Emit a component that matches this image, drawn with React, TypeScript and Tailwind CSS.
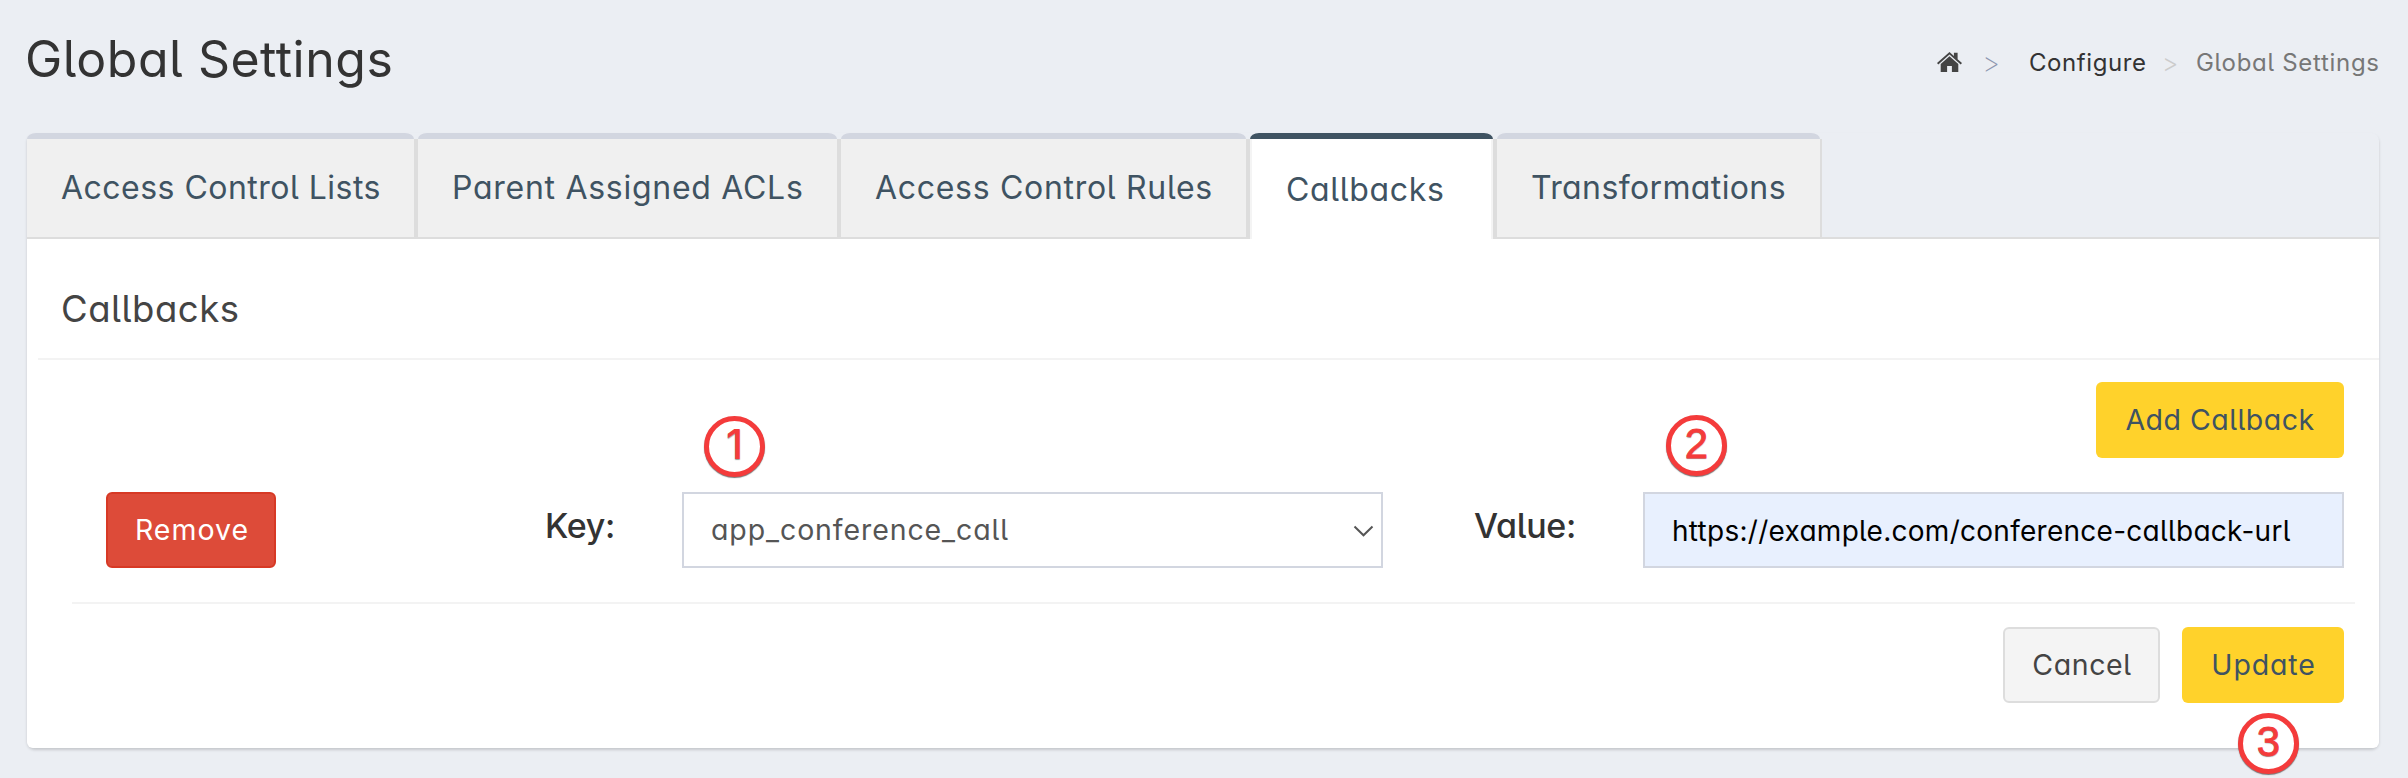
import type { ReactNode } from "react";

type Tab = { label: string; box: string; text: string; active?: boolean };

const tabs: Tab[] = [
  { label: "Access Control Lists", box: "w-[389px]", text: "pl-[34px] tracking-[0.48px]" },
  { label: "Parent Assigned ACLs", box: "w-[423px]", text: "pl-[34px] tracking-[0.72px]" },
  { label: "Access Control Rules", box: "w-[409px]", text: "pl-[34px] tracking-[0.7px]" },
  { label: "Callbacks", box: "w-[247px]", text: "pl-[34px] tracking-[0.67px]", active: true },
  { label: "Transformations", box: "w-[327px]", text: "pl-[34px] tracking-[0.38px]" },
];

function TabItem({ tab, first }: { tab: Tab; first: boolean }) {
  return (
    <li className={`flex h-[106px] flex-col ${tab.box}`}>
      <div
        className={`h-[6px] shrink-0 [border-radius:9px_9px_0_0/6px_6px_0_0] ${first ? "mr-[2px]" : "mx-[2px]"} ${
          tab.active ? "bg-[#3f5362]" : "bg-[#d2d6e0]"
        }`}
      />
      <div
        className={`flex flex-1 border-[#ddd] ${first ? "border-r-2" : "border-x-2"} ${
          tab.active ? "bg-white" : "border-b-2 bg-[#f0f0f0]"
        }`}
      >
        <a
          className={`flex-1 whitespace-nowrap text-[32px] leading-[40px] text-[#3f5362] ${tab.text} ${
            tab.active ? "border-x-2 border-[#f4f4f4] pt-[31px]" : "pt-[29px]"
          }`}
        >
          {tab.label}
        </a>
      </div>
    </li>
  );
}

function Step({ children, place, digit }: { children: ReactNode; place: string; digit: string }) {
  return (
    <span
      className={`absolute flex size-[61px] items-center justify-center rounded-full border-[5px] border-[#f43b3b] bg-white pb-[4px] leading-none text-[#f43b3b] shadow-[0_1px_1px_#777] [text-shadow:0_1px_1px_#999] ${place} ${digit}`}
    >
      {children}
    </span>
  );
}

const button = "flex h-[76px] items-center justify-center rounded-[6px] text-[28.5px] whitespace-nowrap";

export default function App() {
  return (
    <div className="h-[778px] w-[2408px] overflow-hidden bg-[#ebeef3] pl-[27px] font-['Inter',sans-serif] text-[#333] [font-feature-settings:'cv11','cv05']">
      <header className="flex h-[133px] w-[2354px] justify-between">
        <h1 className="-ml-[2px] pt-[29px] text-[50px] leading-[60px] tracking-[0.5px] whitespace-nowrap">
          Global Settings
        </h1>
        <nav className="flex pt-[48px] text-[24px] leading-[30px] whitespace-nowrap">
          <svg className="mt-[4px] h-[20px] w-[25px]" viewBox="0 0 25 20" fill="#444">
            <path d="M12.5 0 16.9 3.9V.8h3.7v6.4L25 11l-1.3 1.5L12.5 2.6 1.3 12.500 0 11Z" />
            <path d="M12.5 4.200 21.300 12v8h-6.400v-6h-4.800v6H3.700v-8Z" />
          </svg>
          <span className="w-[67px] pl-[20px] text-[28px] font-[200] text-[#8f98b0]">&gt;</span>
          <a className="w-[132px] tracking-[0.58px]">Configure</a>
          <span className="w-[35px] pl-px text-[25px] font-[300] text-[#ccc]">&gt;</span>
          <span className="w-[185px] tracking-[0.7px] text-[#777]">Global Settings</span>
        </nav>
      </header>

      <main className="h-[615px] w-[2352px] rounded-[8px] shadow-[0_2px_3px_rgba(0,0,0,0.16)]">
        <ul className="flex h-[106px]">
          {tabs.map((t, i) => (
            <TabItem key={t.label} tab={t} first={i === 0} />
          ))}
          <li className="flex-1 border-b-2 border-[#ddd]" />
        </ul>
        <section className="h-[509px] rounded-b-[6px] bg-white">
          <h2 className="ml-[11px] h-[121px] border-b-2 border-[#f3f3f3] pt-[50px] pl-[23px] text-[36.5px] leading-[40px] tracking-[0.5px] text-[#444]">
            Callbacks
          </h2>
          <div className="flex justify-end pt-[22px] pr-[35px]">
            <button className={`${button} w-[248px] bg-[#ffd22b] pt-px tracking-[0.48px] text-[#3f5362]`}>
              Add Callback
            </button>
          </div>
          <div className="mr-[24px] ml-[45px] flex h-[146px] border-b-2 border-[#f3f3f3] pt-[34px] pl-[34px]">
            <button
              className={`${button} w-[170px] border-2 border-[#d73925] bg-[#dd4b39] pt-px pl-[2px] tracking-[1px] text-white`}
            >
              Remove
            </button>
            <label className="flex h-[76px] w-[406px] items-center pb-[9px] pl-[269px] text-[34px] font-[550] tracking-[-0.3px]">
              Key:
            </label>
            <div className="relative flex h-[76px] w-[701px] items-center justify-between border-2 border-[#d2d6e0] bg-white pt-px pr-[7px] pl-[27px] text-[28.5px] tracking-[0.9px] text-[#555]">
              app_conference_call
              <svg className="h-[12px] w-[21px]" viewBox="0 0 21 12" fill="none" stroke="#555" strokeWidth="2">
                <path d="m1.500 1.500 9 8.800 9-8.800" />
              </svg>
              <Step place="left-[20px] -top-[78px]" digit="text-[41px] font-[550] [letter-spacing:0]">
                1
              </Step>
            </div>
            <label className="flex h-[76px] w-[260px] items-center pb-[9px] pl-[91px] text-[34px] font-[550] tracking-[-0.3px]">
              Value:
            </label>
            <div className="relative flex h-[76px] w-[701px] items-center border-2 border-[#d2d6e0] bg-[#e8f0fe] pt-px pl-[27px] text-[28px] tracking-[0.27px] text-black">
              https://example.com/conference-callback-url
              <Step
                place="left-[21px] -top-[79px]"
                digit="font-['Liberation_Sans',sans-serif] text-[42px] font-normal [letter-spacing:0] [-webkit-text-stroke:0.8px_#f43b3b]"
              >
                2
              </Step>
            </div>
          </div>
          <div className="flex justify-end gap-[22px] pt-[23px] pr-[35px]">
            <button className={`${button} w-[157px] border-2 border-[#ddd] bg-[#f4f4f4] pl-px tracking-[0.6px] text-[#444]`}>
              Cancel
            </button>
            <button className={`${button} relative w-[162px] bg-[#ffd22b] pl-px tracking-[0.85px] text-[#3f5362]`}>
              Update
              <Step
                place="left-[56px] top-[86px]"
                digit="font-['Liberation_Sans',sans-serif] text-[42px] font-normal [letter-spacing:0] [-webkit-text-stroke:0.8px_#f43b3b]"
              >
                3
              </Step>
            </button>
          </div>
        </section>
      </main>
    </div>
  );
}
